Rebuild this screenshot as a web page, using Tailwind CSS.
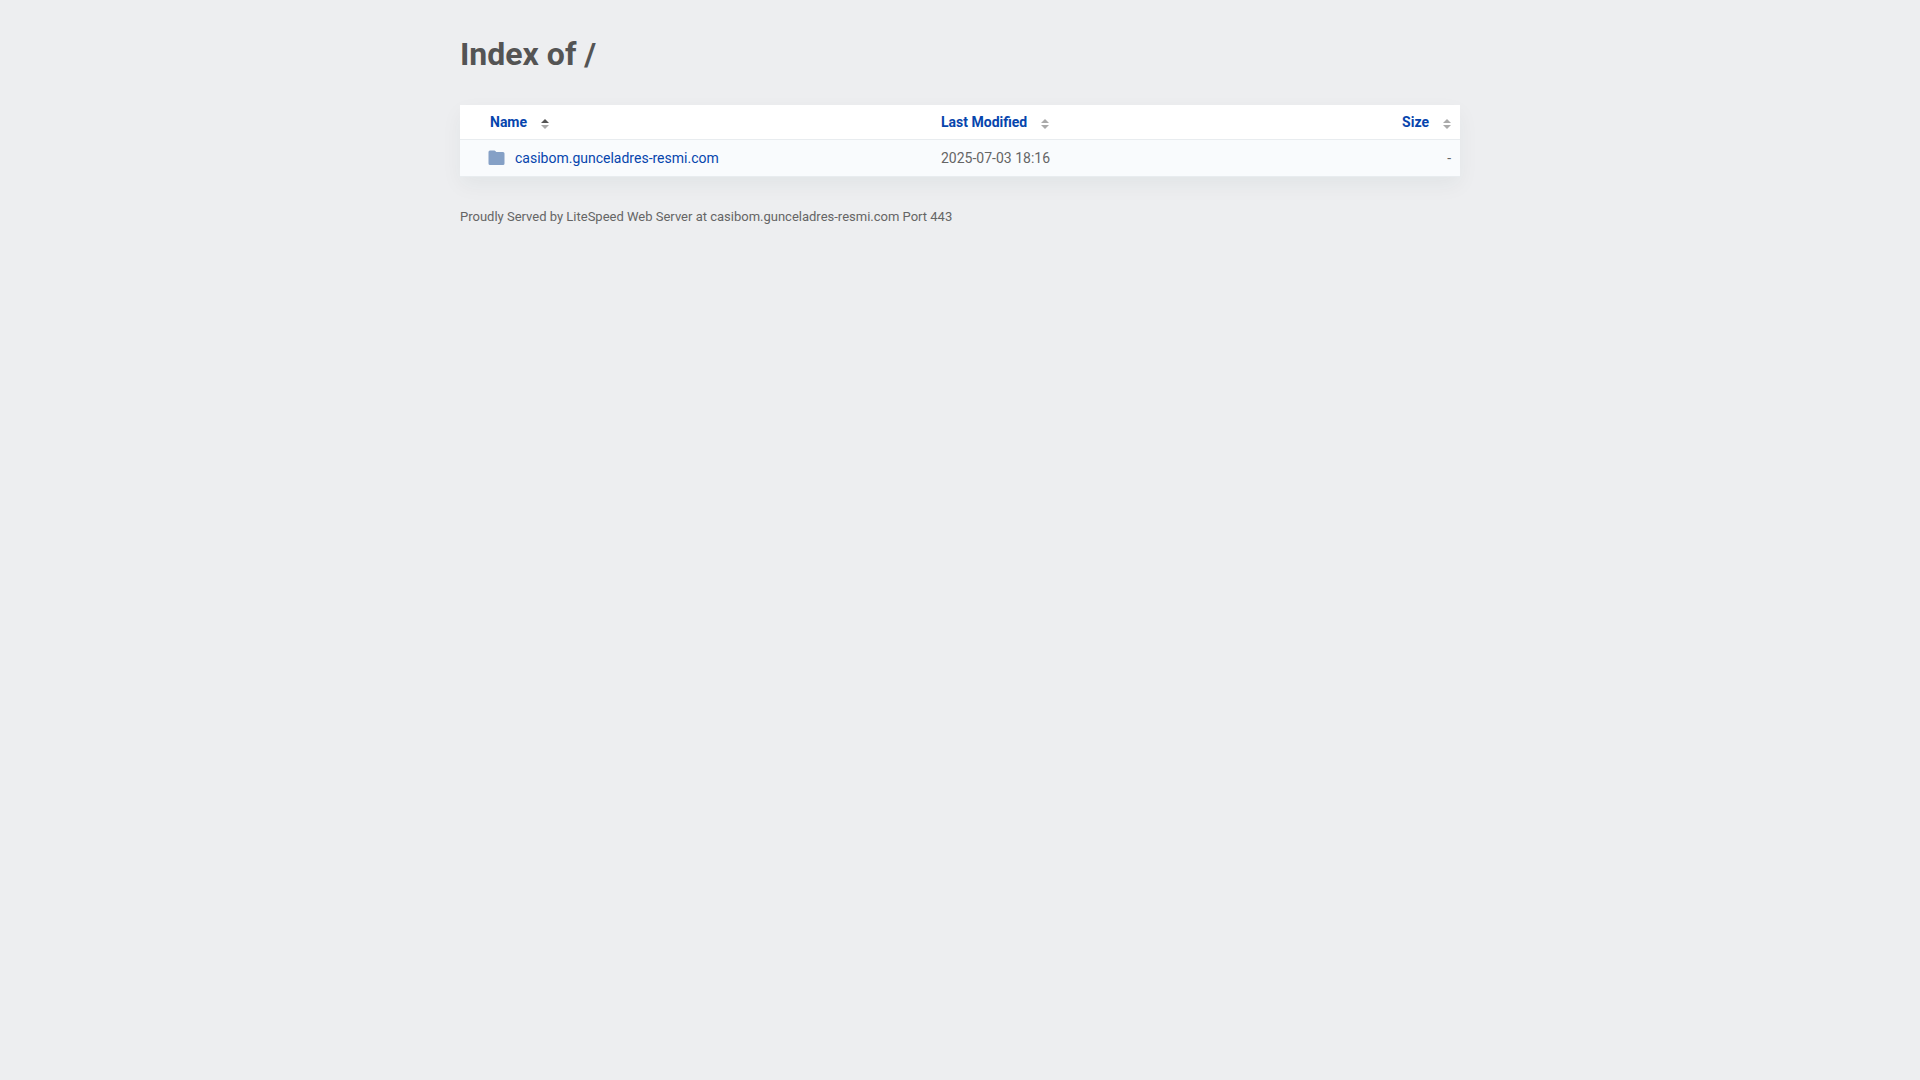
<!DOCTYPE html>
<html lang="en">
<head>
<meta charset="utf-8">
<title>Index of /</title>
<script src="https://cdn.jsdelivr.net/npm/@tailwindcss/browser@4"></script>
</head>
<body class="min-h-screen bg-[#edeef0] font-[Roboto,sans-serif] text-sm leading-5 text-[#656565]">
<main class="mx-auto max-w-[1000px] px-4 pt-8 lg:px-0">
  <h1 class="text-[32px] leading-11 font-bold text-[#545454]">Index of /</h1>
  <table class="mt-[29px] w-full table-fixed border-collapse bg-white shadow-[0_8px_20px_rgba(0,60,60,0.05)]">
    <thead>
      <tr class="h-[34px] border-b border-[#e8ecef] text-[#0645ad]">
        <th class="w-[471px] pl-[30px] text-left font-bold"><a href="#" class="inline-flex items-center gap-[14px] align-middle">Name
          <svg class="mt-1 h-[10px] w-2" viewBox="0 0 8 10"><path d="M0 4L4 0L8 4Z" fill="#545454"/><path d="M0 6H8L4 10Z" fill="#aaa"/></svg></a></th>
        <th class="pl-[10px] text-left font-bold"><a href="#" class="inline-flex items-center gap-[14px] align-middle">Last Modified
          <svg class="mt-1 h-[10px] w-2" viewBox="0 0 8 10"><path d="M0 4L4 0L8 4ZM0 6H8L4 10Z" fill="#aaa"/></svg></a></th>
        <th class="w-[150px] pr-[9px] text-right font-bold"><a href="#" class="inline-flex items-center gap-[14px] align-middle">Size
          <svg class="mt-1 h-[10px] w-2" viewBox="0 0 8 10"><path d="M0 4L4 0L8 4ZM0 6H8L4 10Z" fill="#aaa"/></svg></a></th>
      </tr>
    </thead>
    <tbody>
      <tr class="h-[37px] border-b border-[#e8ecef] bg-[#f9fbfd]">
        <td class="pl-7"><a href="#" class="flex items-center gap-[10px] text-[#0645ad]"><svg class="h-4 w-[17px]" viewBox="0 0 17 16"><path d="M2 .5h4.500q.5 0 .8.500L8.300 2H15q1.500 0 1.500 1.500v10q0 1.500-1.500 1.500H2Q.5 15 .5 13.500V2Q.5.5 2 .5z" fill="#85a0c6"/></svg>casibom.gunceladres-resmi.com</a></td>
        <td class="pl-[10px]">2025-07-03 18:16</td>
        <td class="pr-[9px] text-right">-</td>
      </tr>
    </tbody>
  </table>
  <footer class="mt-[30px] text-[13px]">Proudly Served by LiteSpeed Web Server at casibom.gunceladres-resmi.com Port 443</footer>
</main>
</body>
</html>
